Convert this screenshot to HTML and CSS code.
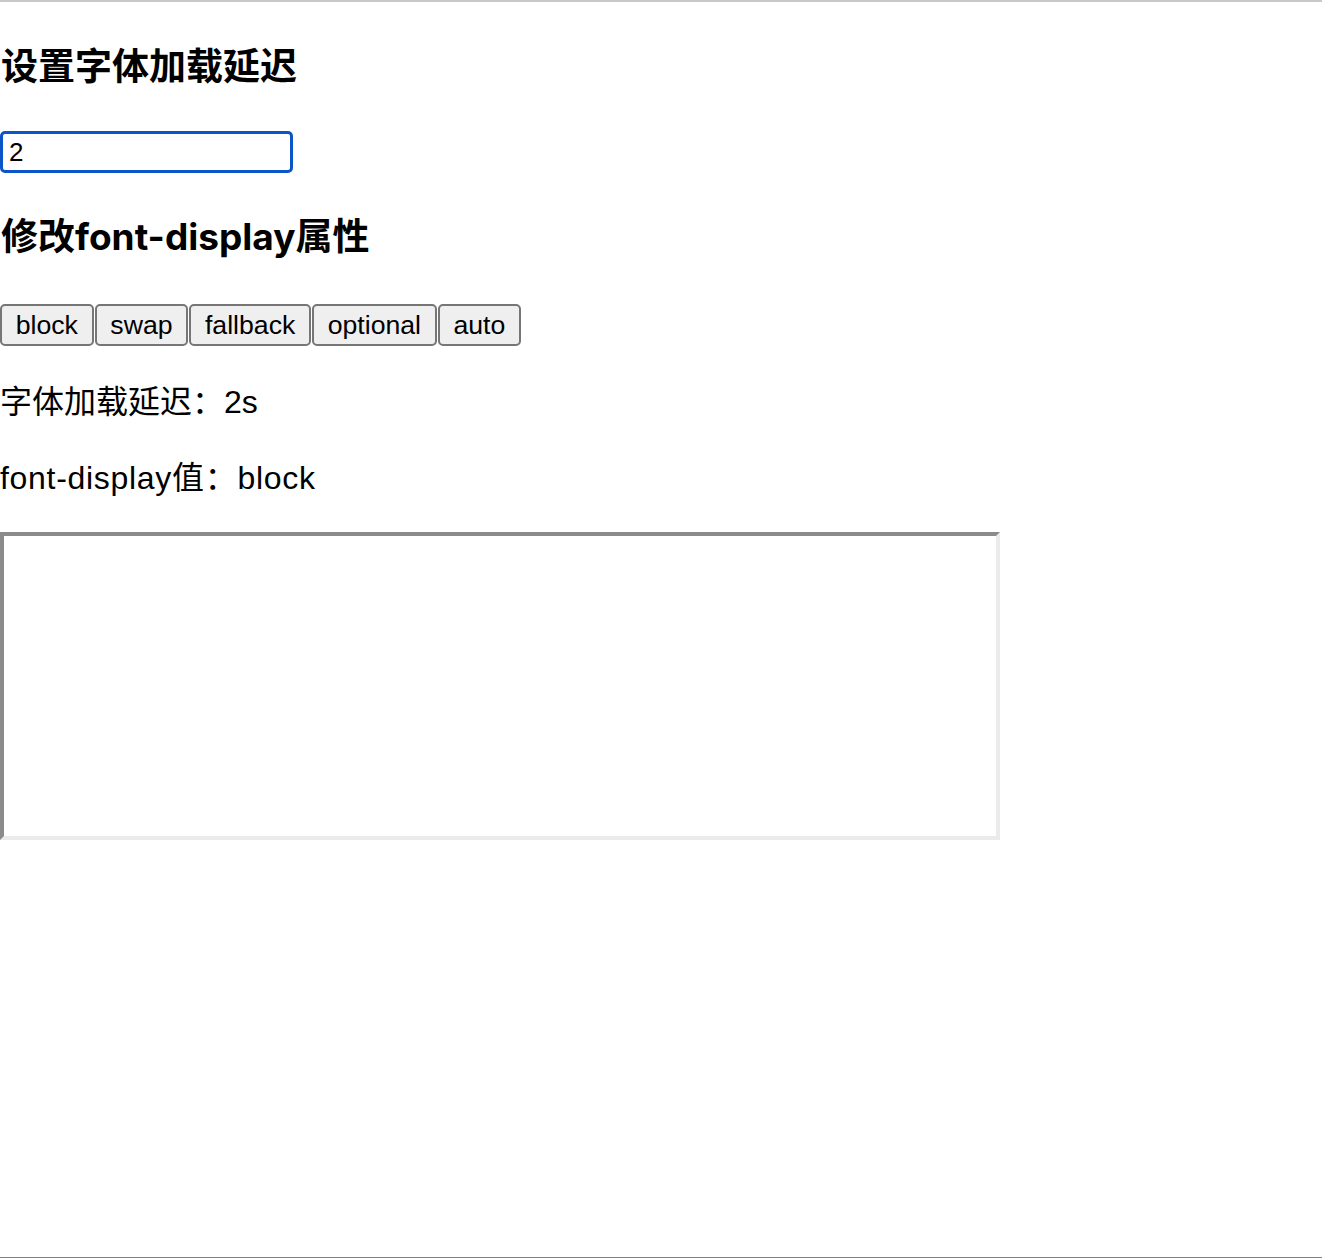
FILE: index.html
```html
<!DOCTYPE html>
<html lang="zh-CN">
<head>
<meta charset="utf-8">
<title>font-display</title>
<link rel="stylesheet" href="styles.css">
</head>
<body>
<div class="page">
  <h3 class="title first">设置字体加载延迟</h3>
  <div class="field"><input class="delay" type="text" value="2"></div>
  <h3 class="title second">修改font-display属性</h3>
  <div class="buttons">
    <button class="btn">block</button>
    <button class="btn">swap</button>
    <button class="btn">fallback</button>
    <button class="btn">optional</button>
    <button class="btn">auto</button>
  </div>
  <p class="info one">字体加载延迟：2s</p>
  <p class="info two">font-display值：block</p>
  <div class="frame"></div>
</div>
</body>
</html>
```

FILE: styles.css
```css
html, body {
  margin: 0;
  padding: 0;
  background: #fff;
}
body {
  font-family: "Liberation Sans", "Noto Sans CJK SC", sans-serif;
  color: #000;
}
.page {
  border-top: 2px solid #c8c8c8;
  border-bottom: 1px solid #808080;
  height: 1255px;
  box-sizing: content-box;
  display: flex;
  flex-direction: column;
  align-items: flex-start;
}
.title {
  font-family: "Inter", "Noto Sans CJK SC", sans-serif;
  font-size: 37px;
  line-height: 44px;
  font-weight: bold;
  margin: 0;
  padding-left: 1px;
}
.first { margin-top: 43px; }
.second { margin-top: 42px; }
.field {
  margin-top: 42px;
  display: flex;
}
.delay {
  width: 293px;
  height: 42px;
  box-sizing: border-box;
  margin: 0;
  border: 3px solid #0b55c9;
  border-radius: 5px;
  padding: 0 6px;
  font-family: "Liberation Sans", sans-serif;
  font-size: 26px;
  color: #000;
  background: #fff;
  outline: none;
}
.buttons {
  margin-top: 45px;
  display: flex;
  gap: 1px;
}
.btn {
  height: 42px;
  box-sizing: border-box;
  margin: 0;
  padding: 0 13.7px;
  border: 2px solid #767676;
  border-radius: 5px;
  background: #efefef;
  font-family: "Liberation Sans", sans-serif;
  font-size: 26.67px;
  color: #000;
}
.info {
  font-family: "Liberation Sans", "Noto Sans CJK SC", sans-serif;
  margin: 0;
  font-size: 32px;
  line-height: 36px;
}
.one { margin-top: 38px; }
.two {
  margin-top: 40px;
  letter-spacing: 0.7px;
}
.frame {
  margin-top: 36px;
  width: 1000px;
  height: 308px;
  box-sizing: border-box;
  border: 4px solid;
  border-color: #8b8b8b #ebebeb #ebebeb #8b8b8b;
  background: #fff;
}
```
